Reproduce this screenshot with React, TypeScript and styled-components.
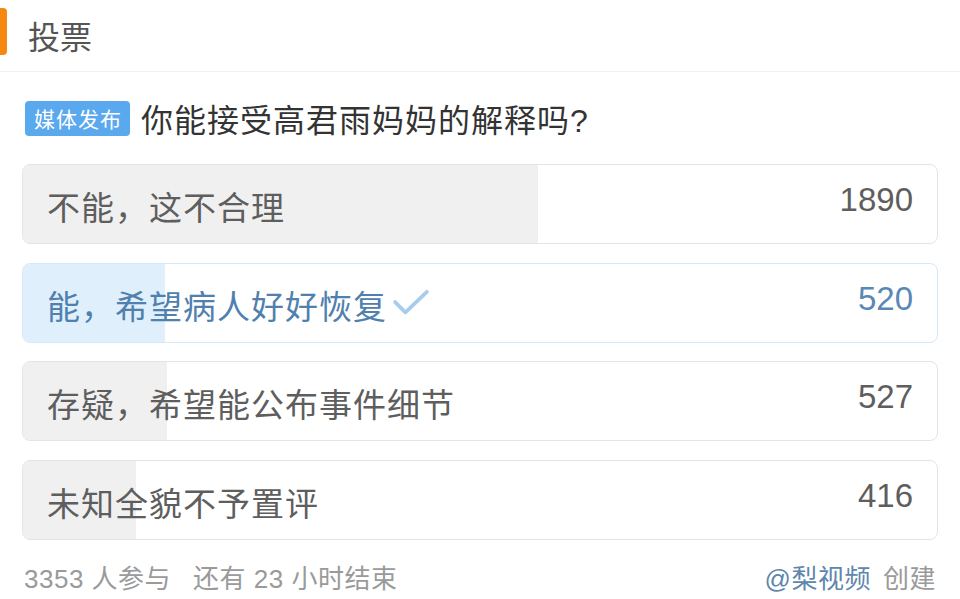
import { createGlobalStyle, styled } from 'styled-components';

const GlobalStyle = createGlobalStyle`
  body {
    margin: 0;
    background: #ffffff;
    font-family: "Liberation Sans", "Noto Sans CJK SC", sans-serif;
  }
`;

type Option = { label: string; count: number; chosen?: boolean };

const options: Option[] = [
  { label: '不能，这不合理', count: 1890 },
  { label: '能，希望病人好好恢复', count: 520, chosen: true },
  { label: '存疑，希望能公布事件细节', count: 527 },
  { label: '未知全貌不予置评', count: 416 },
];

const total = 3353;

const Check = () => (
  <CheckIcon viewBox="0 0 40 30">
    <path d="M3 14 L14 25 L37 3" fill="none" stroke="#a9cbec" strokeWidth="4" strokeLinecap="round" strokeLinejoin="round" />
  </CheckIcon>
);

const App = () => {
  return (
    <Page>
      <GlobalStyle />
      <Header>
        <Accent />
        <HeaderTitle>投票</HeaderTitle>
      </Header>
      <Body>
        <Question>
          <Tag>媒体发布</Tag>
          <QuestionText>你能接受高君雨妈妈的解释吗?</QuestionText>
        </Question>
        <OptionList>
          {options.map((o) => (
            <OptionRow key={o.label} $chosen={o.chosen}>
              <Fill $chosen={o.chosen} style={{ width: `${(o.count / total) * 100}%` }} />
              <OptionLabel $chosen={o.chosen}>
                {o.label}
                {o.chosen && <Check />}
              </OptionLabel>
              <Count $chosen={o.chosen}>{o.count}</Count>
            </OptionRow>
          ))}
        </OptionList>
        <Footer>
          <Meta $gap={22}>
            <span>3353 人参与</span>
            <span>还有 23 小时结束</span>
          </Meta>
          <Meta $gap={12}>
            <Author>@梨视频</Author>
            <span>创建</span>
          </Meta>
        </Footer>
      </Body>
    </Page>
  );
};

export default App;

const Page = styled.div`
  width: 960px;
  height: 599px;
  overflow: hidden;
  background: #fff;
`;

const Header = styled.div`
  height: 72px;
  display: flex;
  align-items: center;
  gap: 21px;
  border-bottom: 1px solid #f1f1f1;
  box-sizing: border-box;
`;

const Accent = styled.div`
  width: 7px;
  height: 47px;
  margin-top: -9px;
  background: #f6870f;
  border-radius: 0 4px 4px 0;
`;

const HeaderTitle = styled.div`
  font-size: 32px;
  color: #555;
  margin-top: -2px;
`;

const Body = styled.div`
  padding: 0 22px;
`;

const Question = styled.div`
  display: flex;
  align-items: center;
  gap: 11px;
  height: 92px;
  padding-left: 3px;
`;

const Tag = styled.div`
  height: 35px;
  padding: 0 8px 0 9px;
  display: flex;
  align-items: center;
  background: #5aa8ee;
  color: #fff;
  font-size: 21px;
  letter-spacing: 1px;
  border-radius: 4px;
`;

const QuestionText = styled.div`
  font-size: 32px;
  letter-spacing: 1px;
  color: #333;
`;

const OptionList = styled.div`
  display: flex;
  flex-direction: column;
  gap: 18.5px;
`;

const OptionRow = styled.div<{ $chosen?: boolean }>`
  position: relative;
  height: 80px;
  box-sizing: border-box;
  border: 1px solid ${(p) => (p.$chosen ? '#d6e7f6' : '#e4e4e4')};
  border-radius: 8px;
  overflow: hidden;
  display: flex;
  align-items: center;
  justify-content: space-between;
  padding: 0 24px;
  background: #fff;
`;

const Fill = styled.div<{ $chosen?: boolean }>`
  position: absolute;
  left: 0;
  top: 0;
  bottom: 0;
  background: ${(p) => (p.$chosen ? '#dfeffc' : '#f0f0f0')};
`;

const OptionLabel = styled.div<{ $chosen?: boolean }>`
  position: relative;
  display: flex;
  align-items: center;
  gap: 5px;
  font-size: 33px;
  letter-spacing: 1px;
  margin-top: 4px;
  color: ${(p) => (p.$chosen ? '#5080ad' : '#5e5e5e')};
`;

const CheckIcon = styled.svg`
  width: 38px;
  height: 28px;
  margin-top: -4px;
`;

const Count = styled.div<{ $chosen?: boolean }>`
  position: relative;
  font-size: 33px;
  margin-bottom: 8px;
  color: ${(p) => (p.$chosen ? '#5a88b5' : '#5e5e5e')};
`;

const Footer = styled.div`
  display: flex;
  justify-content: space-between;
  align-items: center;
  padding: 18px 2px 0 2px;
  font-size: 26px;
  letter-spacing: 0.5px;
  color: #9a9a9a;
`;

const Meta = styled.div<{ $gap: number }>`
  display: flex;
  gap: ${(p) => p.$gap}px;
`;

const Author = styled.span`
  color: #5f86ad;
`;
